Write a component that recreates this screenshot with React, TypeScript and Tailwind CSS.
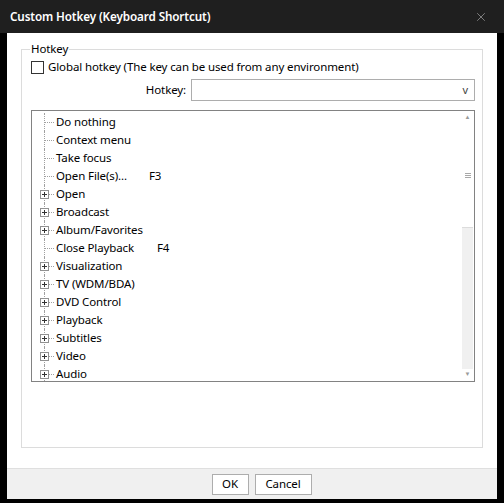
import { X } from "lucide-react";

const items = [
  { label: "Do nothing", group: false },
  { label: "Context menu", group: false },
  { label: "Take focus", group: false },
  { label: "Open File(s)...", group: false, key: "F3", labelW: "w-[93px]" },
  { label: "Open", group: true },
  { label: "Broadcast", group: true },
  { label: "Album/Favorites", group: true },
  { label: "Close Playback", group: false, key: "F4", labelW: "w-[101px]" },
  { label: "Visualization", group: true },
  { label: "TV (WDM/BDA)", group: true },
  { label: "DVD Control", group: true },
  { label: "Playback", group: true },
  { label: "Subtitles", group: true },
  { label: "Video", group: true },
  { label: "Audio", group: true },
];

function TreeRow({ item }: { item: (typeof items)[number] }) {
  return (
    <div className="flex h-[18px] items-center">
      <div className="relative h-full w-[24px] shrink-0">
        <div className="absolute left-[12px] top-0 h-full border-l border-dotted border-[#a0a0a0]" />
        <div className="absolute left-[12px] top-[9px] w-[10px] border-t border-dotted border-[#a0a0a0]" />
        {item.group && (
          <div className="absolute left-[8px] top-[5px] flex h-[9px] w-[9px] items-center justify-center border border-[#919191] bg-white">
            <div className="relative h-[5px] w-[5px]">
              <div className="absolute left-0 top-[2px] h-px w-[5px] bg-[#333]" />
              <div className="absolute left-[2px] top-0 h-[5px] w-px bg-[#333]" />
            </div>
          </div>
        )}
      </div>
      <span className={`shrink-0 whitespace-nowrap ${item.labelW ?? ""}`}>{item.label}</span>
      {item.key && <span>{item.key}</span>}
    </div>
  );
}

export default function App() {
  return (
    <div
      className="flex h-[503px] w-[504px] flex-col bg-black text-[11.5px] tracking-[-0.12px] text-black"
      style={{ fontFamily: '"Noto Sans", "Open Sans", sans-serif' }}
    >
      {/* title bar */}
      <div className="flex h-[33px] shrink-0 items-center justify-between bg-[#1f1f1f] pl-[10px] pr-[16px]">
        <span className="text-[11.7px] font-semibold text-white">Custom Hotkey (Keyboard Shortcut)</span>
        <X className="h-[14px] w-[14px] text-[#8a8a8a]" strokeWidth={1.5} />
      </div>

      <div className="mx-[7px] flex flex-1 flex-col bg-white">
        <div className="flex-1 px-[14px] pt-[8px]">
          <fieldset className="h-[407px] border border-[#dcdcdc] pl-[9px] pr-[7px]">
            <legend className="-ml-[1px] px-[1px] leading-[16px]">Hotkey</legend>

            <label className="mt-[2px] flex h-[16px] items-center gap-[4px]">
              <span className="h-[13px] w-[13px] border border-[#333] bg-white" />
              <span>Global hotkey (The key can be used from any environment)</span>
            </label>

            <div className="mt-[4px] flex items-center justify-end gap-[5px]">
              <span>Hotkey:</span>
              <div className="flex h-[22px] w-[284px] items-center justify-end border border-[#adadad] bg-white pr-[6px]">
                <span className="text-[11px] text-[#444]">v</span>
              </div>
            </div>

            <div className="mt-[9px] flex h-[272px] border border-[#828282] bg-white">
              <div className="flex-1 overflow-hidden pt-[2px]">
                {items.map((item) => (
                  <TreeRow key={item.label} item={item} />
                ))}
              </div>
              <div className="my-px mr-px flex w-[11px] flex-col bg-[#f0f0f0]">
                <div className="flex h-[11px] items-center justify-center bg-white text-[6px] text-[#9a9a9a]">▲</div>
                <div className="flex h-[105px] items-center justify-center border-b border-[#dcdcdc] bg-white">
                  <div className="flex flex-col gap-[1px]">
                    <div className="h-px w-[6px] bg-[#a8a8a8]" />
                    <div className="h-px w-[6px] bg-[#a8a8a8]" />
                    <div className="h-px w-[6px] bg-[#a8a8a8]" />
                  </div>
                </div>
                <div className="flex-1" />
                <div className="flex h-[11px] items-center justify-center bg-white text-[6px] text-[#9a9a9a]">▼</div>
              </div>
            </div>
          </fieldset>
        </div>

        <div className="flex h-[31px] shrink-0 items-center justify-center gap-[6px] border-t border-[#dfdfdf] bg-[#f0f0f0] pl-[19px]">
          <button className="h-[21px] w-[37px] border border-[#adadad] bg-white">OK</button>
          <button className="h-[21px] w-[57px] border border-[#adadad] bg-white">Cancel</button>
        </div>
      </div>
      <div className="h-[4px] shrink-0" />
    </div>
  );
}
